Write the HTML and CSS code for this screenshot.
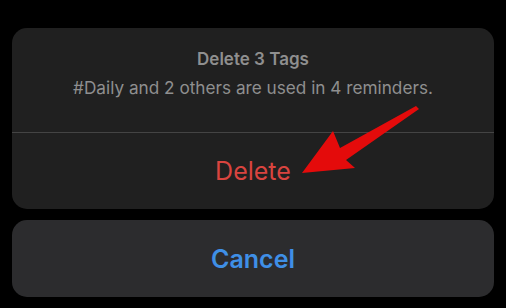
FILE: index.html
```html
<!DOCTYPE html>
<html>
<head>
<meta charset="utf-8">
<link rel="stylesheet" href="styles.css">
</head>
<body>
<div class="sheet">
  <div class="card">
    <div class="header">
      <div class="title">Delete 3 Tags</div>
      <div class="message">#Daily and 2 others are used in 4 reminders.</div>
    </div>
    <div class="action destructive">Delete</div>
  </div>
  <div class="card cancel">
    <div class="action">Cancel</div>
  </div>
</div>
<svg class="arrow" width="506" height="308" viewBox="0 0 506 308">
  <polygon points="416,106 419,109 346,160 355,168 302,173 333,131 340,148" fill="#e40b0b"/>
</svg>
</body>
</html>
```
FILE: styles.css
```css
html, body {
  margin: 0;
  padding: 0;
  background: #000;
  width: 506px;
  height: 308px;
  overflow: hidden;
  font-family: Inter, "Noto Sans", sans-serif;
}
.sheet {
  display: flex;
  flex-direction: column;
  gap: 11px;
  padding: 28px 12px 0 12px;
}
.card {
  background: #202020;
  border-radius: 15px;
  display: flex;
  flex-direction: column;
}
.header {
  height: 105px;
  border-bottom: 1px solid #444;
  display: flex;
  flex-direction: column;
  align-items: center;
  box-sizing: border-box;
  padding-top: 21px;
}
.title {
  color: #8f8f8f;
  font-size: 17px;
  font-weight: 600;
  line-height: 20px;
}
.message {
  color: #8f8f8f;
  font-size: 17.2px;
  line-height: 20px;
  margin-top: 9px;
}
.action {
  height: 76px;
  display: flex;
  align-items: center;
  justify-content: center;
  font-size: 25px;
}
.destructive {
  color: #d9443f;
}
.cancel {
  background: #2c2c2e;
}
.cancel .action {
  height: 77px;
  color: #3f8fe6;
  font-weight: 600;
}
.arrow {
  position: absolute;
  left: 0;
  top: 0;
}
```
